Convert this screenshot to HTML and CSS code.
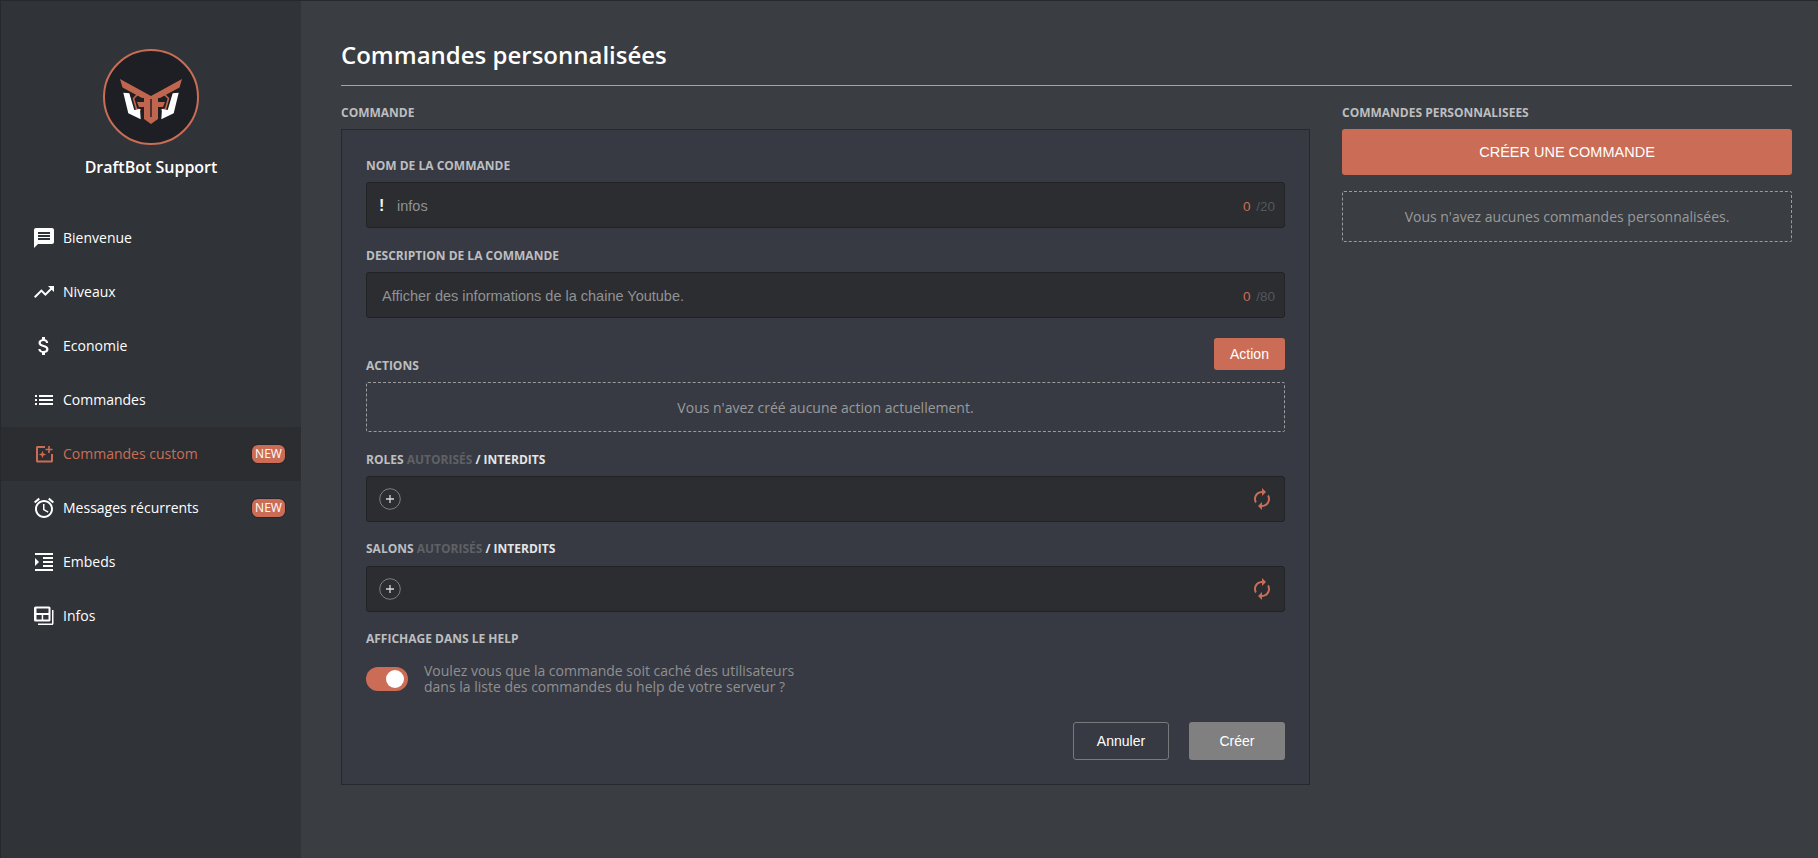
FILE: index.html
```html
<!DOCTYPE html>
<html>
<head>
  <meta charset="utf-8">
  <title>Commandes personnalisées</title>
  <link rel="stylesheet" href="styles.css">
</head>
<body>
  <aside class="sidebar">
    <svg class="logo" viewBox="0 0 96 96">
      <circle cx="48" cy="48" r="47" fill="#1e1f24" stroke="#c96d55" stroke-width="2"/>
      <path fill="#c0664e" d="M17 30 48 47 79 30 76.500 38.500 57 49H55V53H62L60 58H55V70L48 75 41 70V58H36L34 53H41V49H39L19.500 38.500Z"/>
      <path fill="none" stroke="#c0664e" stroke-width="1.600" d="M35 45 30.500 49.500 33.500 60 38 61M61 45 65.500 49.500 62.500 60 58 61"/>
      <path fill="#1e1f24" d="M47.300 50h1.400v18h-1.400z"/>
      <path fill="#fff" d="M20.300 43.700 26.300 44.300 31.300 61 37 60 37.700 70.300 25.300 64.300ZM75.700 43.700 69.700 44.300 64.700 61 59 60 58.300 70.300 70.700 64.300Z"/>
    </svg>
    <div class="server-name">DraftBot Support</div>
    <nav class="nav">
      <a class="nav-item">
        <svg viewBox="0 0 24 24"><path d="M20 2H4c-1.100 0-1.990.9-1.990 2L2 22l4-4h14c1.100 0 2-.9 2-2V4c0-1.100-.9-2-2-2zm-2 12H6v-2h12v2zm0-3H6V9h12v2zm0-3H6V6h12v2z"/></svg>
        <span>Bienvenue</span>
      </a>
      <a class="nav-item">
        <svg viewBox="0 0 24 24"><path d="M16 6l2.290 2.290-4.880 4.880-4-4L2 16.590 3.410 18l6-6 4 4 6.300-6.290L22 12V6z"/></svg>
        <span>Niveaux</span>
      </a>
      <a class="nav-item">
        <svg viewBox="0 0 24 24"><path d="M11.800 10.900c-2.270-.59-3-1.200-3-2.150 0-1.090 1.010-1.850 2.700-1.850 1.780 0 2.440.85 2.500 2.100h2.210c-.07-1.720-1.120-3.300-3.210-3.810V3h-3v2.160c-1.940.42-3.500 1.680-3.500 3.610 0 2.310 1.910 3.460 4.700 4.130 2.500.6 3 1.480 3 2.410 0 .69-.49 1.790-2.700 1.790-2.060 0-2.870-.92-2.980-2.100h-2.200c.12 2.190 1.760 3.420 3.680 3.830V21h3v-2.150c1.950-.37 3.500-1.500 3.500-3.550 0-2.840-2.430-3.810-4.700-4.400z"/></svg>
        <span>Economie</span>
      </a>
      <a class="nav-item">
        <svg viewBox="0 0 24 24"><path d="M3 13h2v-2H3v2zm0 4h2v-2H3v2zm0-8h2V7H3v2zm4 4h14v-2H7v2zm0 4h14v-2H7v2zM7 7v2h14V7H7z"/></svg>
        <span>Commandes</span>
      </a>
      <a class="nav-item active">
        <svg viewBox="0 0 24 24"><path d="M13 4H5.500C4.600 4 4 4.600 4 5.500V19c0 .9.6 1.500 1.500 1.500h14c.9 0 1.500-.6 1.500-1.500v-7h-2v6.500H6V6h7z"/><path d="M10.500 8.700l1 2.800 2.800 1-2.800 1-1 2.800-1-2.800-2.800-1 2.800-1zM16.200 4h1.600v2.700h2.700v1.600h-2.700V11h-1.600V8.300h-2.700V6.700h2.700z"/></svg>
        <span>Commandes custom</span>
        <b class="badge">NEW</b>
      </a>
      <a class="nav-item">
        <svg viewBox="0 0 24 24"><path d="M22 5.720l-4.600-3.860-1.290 1.530 4.600 3.860L22 5.720zM7.880 3.390L6.600 1.860 2 5.710l1.290 1.530 4.590-3.850zM12.500 8H11v6l4.750 2.850.75-1.230-4-2.370V8zM12 4c-4.970 0-9 4.030-9 9s4.030 9 9 9 9-4.030 9-9-4.030-9-9-9zm0 16c-3.870 0-7-3.130-7-7s3.130-7 7-7 7 3.130 7 7-3.130 7-7 7z"/></svg>
        <span>Messages récurrents</span>
        <b class="badge">NEW</b>
      </a>
      <a class="nav-item">
        <svg viewBox="0 0 24 24"><path d="M3 21h18v-2H3v2zM3 8v8l4-4-4-4zm8 9h10v-2H11v2zM3 3v2h18V3H3zm8 6h10V7H11v2zm0 4h10v-2H11v2z"/></svg>
        <span>Embeds</span>
      </a>
      <a class="nav-item">
        <svg viewBox="0 0 24 24"><path fill-rule="evenodd" d="M3.500 2.500h13.500a1.500 1.500 0 0 1 1.500 1.500v12a1.500 1.500 0 0 1-1.500 1.500H3.500A1.500 1.500 0 0 1 2 16V4a1.500 1.500 0 0 1 1.500-1.500zM4.500 4.500V9h12V4.500zM4.500 11v4.500h5.200V11zM11.200 11v4.500h5.300V11z"/><path d="M20 6h1.500v13.500c0 .9-.6 1.500-1.500 1.500H6v-1.500h14z"/></svg>
        <span>Infos</span>
      </a>
    </nav>
  </aside>

  <main class="content">
    <h1 class="page-title">Commandes personnalisées</h1>
    <div class="columns">
      <section class="col-main">
        <h2 class="label">COMMANDE</h2>
        <div class="panel">
          <h3 class="label">NOM DE LA COMMANDE</h3>
          <div class="field">
            <b class="prefix">!</b>
            <span class="value">infos</span>
            <span class="count"><em>0</em> /20</span>
          </div>

          <h3 class="label desc-label">DESCRIPTION DE LA COMMANDE</h3>
          <div class="field">
            <span class="value desc-value">Afficher des informations de la chaine Youtube.</span>
            <span class="count"><em>0</em> /80</span>
          </div>

          <div class="actions-head">
            <h3 class="label">ACTIONS</h3>
            <button class="btn-action">Action</button>
          </div>
          <div class="dashed dashed-actions">Vous n'avez créé aucune action actuellement.</div>

          <h3 class="label roles-label">ROLES <span class="dim">AUTORISÉS</span> <span class="light">/ INTERDITS</span></h3>
          <div class="field">
            <svg class="plus" viewBox="0 0 22 22">
              <circle cx="11" cy="11" r="10.300" fill="none" stroke="#7c7e82"/>
              <path d="M11 7v8M7 11h8" stroke="#d8d8d8" stroke-width="1.300"/>
            </svg>
            <svg class="sync" viewBox="0 0 24 24"><path d="M12 4V1L8 5l4 4V6c3.310 0 6 2.690 6 6 0 1.010-.25 1.970-.7 2.800l1.460 1.460C19.540 15.030 20 13.570 20 12c0-4.420-3.580-8-8-8zm0 14c-3.310 0-6-2.690-6-6 0-1.010.25-1.970.7-2.800L5.240 7.740C4.460 8.970 4 10.430 4 12c0 4.420 3.580 8 8 8v3l4-4-4-4v3z"/></svg>
          </div>

          <h3 class="label salons-label">SALONS <span class="dim">AUTORISÉS</span> <span class="light">/ INTERDITS</span></h3>
          <div class="field field-salons">
            <svg class="plus" viewBox="0 0 22 22">
              <circle cx="11" cy="11" r="10.300" fill="none" stroke="#7c7e82"/>
              <path d="M11 7v8M7 11h8" stroke="#d8d8d8" stroke-width="1.300"/>
            </svg>
            <svg class="sync" viewBox="0 0 24 24"><path d="M12 4V1L8 5l4 4V6c3.310 0 6 2.690 6 6 0 1.010-.25 1.970-.7 2.800l1.460 1.460C19.540 15.030 20 13.570 20 12c0-4.420-3.580-8-8-8zm0 14c-3.310 0-6-2.690-6-6 0-1.010.25-1.970.7-2.800L5.240 7.740C4.460 8.970 4 10.430 4 12c0 4.420 3.580 8 8 8v3l4-4-4-4v3z"/></svg>
          </div>

          <h3 class="label help-label">AFFICHAGE DANS LE HELP</h3>
          <div class="help-row">
            <span class="toggle"><i></i></span>
            <p>Voulez vous que la commande soit caché des utilisateurs<br>dans la liste des commandes du help de votre serveur ?</p>
          </div>

          <div class="form-buttons">
            <button class="btn-cancel">Annuler</button>
            <button class="btn-create">Créer</button>
          </div>
        </div>
      </section>

      <section class="col-side">
        <h2 class="label">COMMANDES PERSONNALISEES</h2>
        <button class="btn-new">CRÉER UNE COMMANDE</button>
        <div class="dashed dashed-side">Vous n'avez aucunes commandes personnalisées.</div>
      </section>
    </div>
  </main>
</body>
</html>
```

FILE: styles.css
```css
* {
  box-sizing: border-box;
}
html, body {
  height: 100%;
}
body {
  margin: 0;
  display: flex;
  height: 858px;
  overflow: hidden;
  background: #3a3d41;
  border-top: 1px solid #26282b;
  border-left: 1px solid #26282b;
  font-family: "Open Sans", sans-serif;
  color: #fff;
}

/* sidebar */
.sidebar {
  width: 300px;
  flex: none;
  background: #303338;
  display: flex;
  flex-direction: column;
  align-items: center;
  padding-top: 48px;
}
.logo {
  width: 96px;
  height: 96px;
  display: block;
}
.server-name {
  margin-top: 10px;
  font-size: 16px;
  line-height: 24px;
  font-weight: 600;
}
.nav {
  width: 100%;
  margin-top: 32px;
}
.nav-item {
  display: flex;
  align-items: center;
  height: 54px;
  padding: 0 16px 0 31px;
  font-size: 14px;
  color: #fff;
}
.nav-item span {
  margin-bottom: 2px;
}
.nav-item svg {
  width: 24px;
  height: 24px;
  margin-right: 7px;
  fill: currentColor;
  flex: none;
}
.nav-item.active {
  background: #2b2d31;
  color: #cb6d56;
}
.badge {
  margin-left: auto;
  width: 33px;
  text-align: center;
  background: #cb6d56;
  color: #fff;
  font-size: 12px;
  font-weight: 400;
  line-height: 18px;
  border-radius: 6px;
  box-shadow: 0 0 0 1px #26282b;
}

/* content */
.content {
  flex: 1;
  padding: 0 26px 0 40px;
}
.page-title {
  margin: 0;
  height: 85px;
  padding-top: 36px;
  font-size: 24px;
  line-height: 36px;
  font-weight: 600;
  border-bottom: 1px solid #a3a4a6;
}
.columns {
  display: flex;
  gap: 32px;
}
.col-main {
  width: 969px;
  flex: none;
}
.col-side {
  flex: 1;
}
.label {
  margin: 0;
  font-size: 12px;
  line-height: 16px;
  font-weight: 700;
  color: #bdbec0;
}
.col-main > .label,
.col-side > .label {
  margin-top: 19px;
  height: 24px;
}
.panel {
  height: 656px;
  background: #373a42;
  border: 1px solid #26282b;
  padding: 28px 24px 0;
}
.field {
  display: flex;
  align-items: center;
  height: 46px;
  margin-top: 8px;
  padding: 0 12px;
  background: #2b2d31;
  border: 1px solid #212225;
  border-radius: 3px;
  font-family: "Liberation Sans", sans-serif;
  font-size: 14.500px;
}
.prefix {
  margin-top: 2px;
  font-size: 16px;
  width: 18px;
  color: #f2f2f2;
}
.value {
  margin-top: 2px;
  color: #919293;
}
.desc-value {
  margin-left: 3px;
}
.count {
  margin-top: 2px;
  margin-left: auto;
  margin-right: -3px;
  font-size: 13.500px;
  color: #55575b;
}
.count em {
  font-style: normal;
  color: #cb6d56;
  margin-right: 2px;
}
.desc-label {
  margin-top: 20px;
}
.actions-head {
  display: flex;
  justify-content: space-between;
  align-items: flex-end;
  margin-top: 20px;
}
.actions-head .label {
  margin-bottom: -4px;
}
.btn-action {
  width: 71px;
  height: 32px;
  border: none;
  border-radius: 3px;
  background: #cb6d56;
  color: #fff;
  font-family: "Liberation Sans", sans-serif;
  font-size: 14px;
}
.dashed {
  display: flex;
  align-items: center;
  justify-content: center;
  border: 1px dashed #9a9b9d;
  border-radius: 2px;
  color: #999a9c;
  font-size: 14px;
}
.dashed-actions {
  height: 50px;
  margin-top: 12px;
}
.roles-label {
  margin-top: 20px;
}
.salons-label {
  margin-top: 19px;
}
.field-salons {
  margin-top: 9px;
}
.dim {
  color: #5f6166;
}
.light {
  color: #e4e5e6;
}
.plus {
  width: 22px;
  height: 22px;
}
.sync {
  width: 24px;
  height: 24px;
  margin-left: auto;
  margin-right: -2px;
  fill: #cb6d56;
  transform: scaleX(-1);
}
.help-label {
  margin-top: 19px;
}
.help-row {
  display: flex;
  align-items: center;
  gap: 16px;
  margin-top: 16px;
}
.help-row p {
  margin: 0;
  font-size: 14px;
  line-height: 16px;
  color: #8f9093;
}
.toggle {
  width: 42px;
  height: 24px;
  border-radius: 12px;
  background: #cb6d56;
  display: flex;
  align-items: center;
  justify-content: flex-end;
  padding-right: 4px;
  flex: none;
}
.toggle i {
  width: 18px;
  height: 18px;
  border-radius: 50%;
  background: #fff;
}
.form-buttons {
  display: flex;
  justify-content: flex-end;
  gap: 20px;
  margin-top: 27px;
}
.form-buttons button {
  width: 96px;
  height: 38px;
  border-radius: 3px;
  color: #fff;
  font-family: "Liberation Sans", sans-serif;
  font-size: 14px;
}
.btn-cancel {
  background: transparent;
  border: 1px solid #77797c;
}
.btn-create {
  background: #808080;
  border: none;
}
.btn-new {
  display: block;
  width: 100%;
  height: 46px;
  border: none;
  border-radius: 3px;
  background: #cb6d56;
  color: #fff;
  font-family: "Liberation Sans", sans-serif;
  font-size: 14.500px;
}
.dashed-side {
  height: 51px;
  margin-top: 16px;
}
```
